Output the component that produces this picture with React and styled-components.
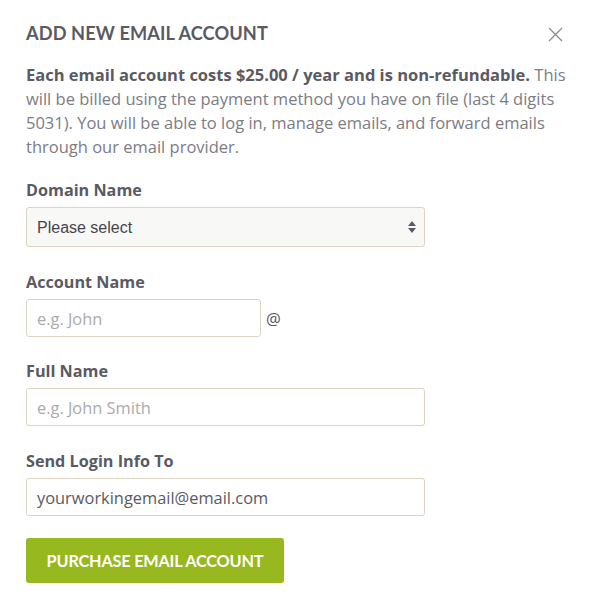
import React from "react";
import styled, { createGlobalStyle } from "styled-components";

const GlobalStyle = createGlobalStyle`
  body {
    margin: 0;
    background: #ffffff;
    font-family: "Open Sans", "Liberation Sans", sans-serif;
  }
`;

const Modal = styled.div`
  width: 595px;
  height: 608px;
  box-sizing: border-box;
  padding: 21px 26px 0 26px;
  background: #ffffff;
`;

const Header = styled.div`
  display: flex;
  justify-content: space-between;
  align-items: center;
  height: 24px;
`;

const Title = styled.h2`
  margin: 0;
  font-family: Lato, "Open Sans", sans-serif;
  font-weight: 700;
  font-size: 18.2px;
  line-height: 24px;
  letter-spacing: 0.1px;
  color: #5a5a64;
`;

const CloseButton = styled.button`
  border: 0;
  background: none;
  padding: 0;
  margin-right: 6px;
  margin-top: 2px;
  width: 15px;
  height: 15px;
  display: flex;
  cursor: pointer;
`;

const Intro = styled.p`
  margin: 18px 0 0 0;
  font-size: 16.5px;
  line-height: 24px;
  color: #7c7c84;

  strong {
    color: #5a5a62;
    font-weight: 700;
  }
`;

const Field = styled.div`
  margin-top: ${(p) => p.gap || 25}px;
`;

const Label = styled.label`
  display: block;
  font-size: 16.2px;
  font-weight: 700;
  color: #5a5a62;
  line-height: 20px;
  margin-bottom: 7px;
`;

const Row = styled.div`
  display: flex;
  align-items: center;
  gap: 5px;
`;

const Input = styled.input`
  box-sizing: border-box;
  width: ${(p) => p.width || 399}px;
  height: 38px;
  padding: 0 10px;
  border: 1px solid #ddd3c3;
  border-radius: 3px;
  font-family: "Open Sans", sans-serif;
  font-size: 16.4px;
  color: #5a5a62;
  background: #fff;
  outline: none;

  &::placeholder {
    color: #aaaaae;
  }
`;

const SelectBox = styled.div`
  position: relative;
  width: 399px;
  height: 40px;
`;

const Select = styled.select`
  appearance: none;
  box-sizing: border-box;
  width: 100%;
  height: 100%;
  padding: 0 10px;
  border: 1px solid #ddd3c3;
  border-radius: 3px;
  background: #f8f8f7;
  font-family: Arial, "Liberation Sans", sans-serif;
  font-size: 16px;
  color: #45454d;
  outline: none;
`;

const Arrows = styled.svg`
  position: absolute;
  right: 9px;
  top: 14px;
  pointer-events: none;
`;

const At = styled.span`
  font-size: 16.5px;
  color: #55555e;
`;

const PurchaseButton = styled.button`
  display: block;
  margin-top: 22px;
  width: 258px;
  height: 45px;
  border: 0;
  border-radius: 3px;
  background: #97b81e;
  color: #ffffff;
  font-family: Lato, sans-serif;
  font-weight: 700;
  font-size: 16.3px;
  letter-spacing: -0.2px;
  cursor: pointer;
`;

export default function App() {
  return (
    <>
      <GlobalStyle />
      <Modal>
        <Header>
          <Title>ADD NEW EMAIL ACCOUNT</Title>
          <CloseButton aria-label="Close">
            <svg width="15" height="15" viewBox="0 0 15 15">
              <path d="M1 1L14 14M14 1L1 14" stroke="#8c8c94" strokeWidth="1.3" />
            </svg>
          </CloseButton>
        </Header>
        <Intro>
          <strong>Each email account costs $25.00 / year and is non-refundable.</strong>
          <span>
            {" "}This will be billed using the payment method you have on file
            (last 4 digits 5031). You will be able to log in, manage emails, and
            forward emails through our email provider.
          </span>
        </Intro>

        <Field gap={21}>
          <Label>Domain Name</Label>
          <SelectBox>
            <Select defaultValue="">
              <option value="">Please select</option>
            </Select>
            <Arrows width="8" height="12" viewBox="0 0 8 12">
              <path d="M4 0L8 5H0Z M4 12L8 7H0Z" fill="#5a5a62" />
            </Arrows>
          </SelectBox>
        </Field>

        <Field>
          <Label>Account Name</Label>
          <Row>
            <Input width={235} placeholder="e.g. John" />
            <At>@</At>
          </Row>
        </Field>

        <Field gap={24}>
          <Label>Full Name</Label>
          <Input placeholder="e.g. John Smith" />
        </Field>

        <Field>
          <Label>Send Login Info To</Label>
          <Input defaultValue="yourworkingemail@email.com" />
        </Field>

        <PurchaseButton>PURCHASE EMAIL ACCOUNT</PurchaseButton>
      </Modal>
    </>
  );
}
